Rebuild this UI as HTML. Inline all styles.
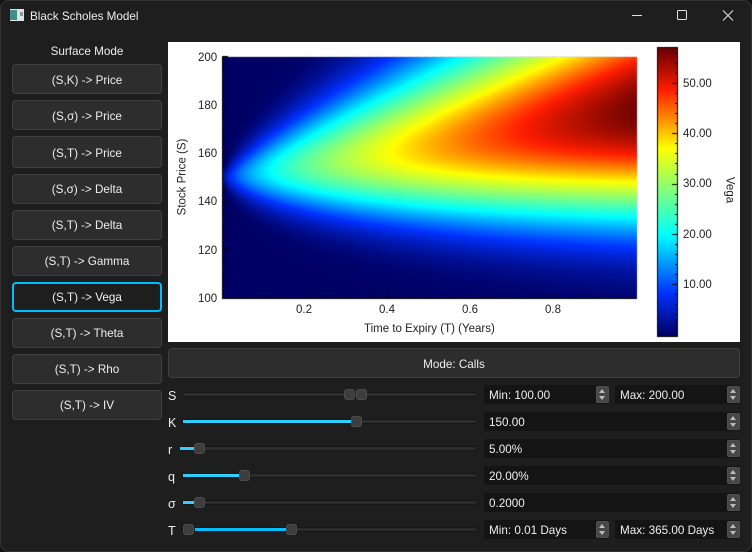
<!DOCTYPE html>
<html><head><meta charset="utf-8"><style>
html,body{margin:0;padding:0;width:752px;height:552px;overflow:hidden;background:#111}
*{box-sizing:border-box}
#w{position:absolute;left:0;top:0;width:752px;height:552px;background:#1e1e1e;border:1px solid #333;border-radius:8px;overflow:hidden;font:11.7px "Liberation Sans","DejaVu Sans",sans-serif;color:#eee}
#w>*,.a{position:absolute}
.tx{white-space:nowrap;line-height:14px}
.b{left:11px;width:150px;height:30px;background:#2d2d2d;border:1px solid #404040;border-radius:4px;text-align:center;line-height:29px;color:#eee}
.b.s{background:#1e1e1e;border:2px solid #00bfff;line-height:28px}
.t{left:181px;width:295px;height:5px;background:#2c2c2c;border:1px solid #161616;border-radius:1px}
.f{height:3px;background:#2fcfff}
.h{width:11px;height:11px;background:#3d3d3d;border:1px solid #4c4c4c;border-radius:3px}
.sb{height:19px;background:#141414;border-radius:2px;padding-left:5px;line-height:21px;color:#eee}
.sp{position:absolute;right:0;top:1px;width:13px;height:17px;background:#474747;border:1px solid #505050;border-radius:2px}
.sp:before,.sp:after{content:"";position:absolute;left:2px;border-left:3.5px solid transparent;border-right:3.5px solid transparent}
.sp:before{top:2px;border-bottom:4px solid #bdbdbd}
.sp:after{bottom:2px;border-top:4px solid #bdbdbd}
.l{left:167px;width:14px;line-height:14px;font-size:12.5px}
.pt{font-size:11.5px;color:#222;line-height:13px;white-space:nowrap}
</style></head><body><div id="w">
<svg style="left:8px;top:7px" width="16" height="14"><rect x="1" y="1" width="14" height="12" fill="#dfe5e5"/><rect x="1" y="2" width="7" height="10" fill="#3f8f86"/><rect x="11" y="4" width="3" height="4" fill="#8a9a9a"/></svg>
<div class="tx" style="left:29px;top:9px">Black Scholes Model</div>
<svg style="left:620px;top:0" width="130" height="30" fill="none" stroke="#e2e2e2" stroke-width="1"><path d="M11 14.5H21"/><rect x="56.5" y="9.5" width="9" height="9" rx="1"/><path d="M102 9.5L112 19.5M112 9.5L102 19.5"/></svg>
<div class="tx" style="left:11px;width:150px;text-align:center;top:44px">Surface Mode</div>
<div class="b" style="top:63px;line-height:31px">(S,K) -&gt; Price</div>
<div class="b" style="top:99px;line-height:31px">(S,σ) -&gt; Price</div>
<div class="b" style="top:135px;height:32px;line-height:33px">(S,T) -&gt; Price</div>
<div class="b" style="top:173px">(S,σ) -&gt; Delta</div>
<div class="b" style="top:209px">(S,T) -&gt; Delta</div>
<div class="b" style="top:245px">(S,T) -&gt; Gamma</div>
<div class="b s" style="top:281px">(S,T) -&gt; Vega</div>
<div class="b" style="top:317px">(S,T) -&gt; Theta</div>
<div class="b" style="top:353px">(S,T) -&gt; Rho</div>
<div class="b" style="top:389px">(S,T) -&gt; IV</div>

<div style="left:167px;top:41px;width:572px;height:300px;background:#fff"></div>
<canvas id="c" width="572" height="300" style="left:167px;top:41px"></canvas>
<div class="pt" style="left:197px;top:51px">200</div>
<div class="pt" style="left:197px;top:99px">180</div>
<div class="pt" style="left:197px;top:147px">160</div>
<div class="pt" style="left:197px;top:195px">140</div>
<div class="pt" style="left:197px;top:244px">120</div>
<div class="pt" style="left:197px;top:292px">100</div>
<div class="pt" style="left:295px;top:303px">0.2</div>
<div class="pt" style="left:378px;top:303px">0.4</div>
<div class="pt" style="left:461px;top:303px">0.6</div>
<div class="pt" style="left:544px;top:303px">0.8</div>
<div class="pt" style="left:363px;top:322px">Time to Expiry (T) (Years)</div>
<div class="pt" style="left:182px;top:176px;transform:translate(-50%,-50%) rotate(-90deg)">Stock Price (S)</div>
<div class="pt" style="left:682px;top:77px">50.00</div>
<div class="pt" style="left:682px;top:127px">40.00</div>
<div class="pt" style="left:682px;top:177px">30.00</div>
<div class="pt" style="left:682px;top:228px">20.00</div>
<div class="pt" style="left:682px;top:278px">10.00</div>
<div class="pt" style="left:728px;top:189px;transform:translate(-50%,-50%) rotate(90deg)">Vega</div>

<div class="b" style="left:167px;width:572px;top:347px;line-height:31px">Mode: Calls</div>

<div class="l" style="top:388px">S</div>
<div class="l" style="top:415px">K</div>
<div class="l" style="top:442px">r</div>
<div class="l" style="top:469px">q</div>
<div class="l" style="top:496px">σ</div>
<div class="l" style="top:523px">T</div>

<div class="t" style="top:391px"></div>
<div class="t" style="top:418px"></div>
<div class="t" style="top:445px"></div>
<div class="t" style="top:472px"></div>
<div class="t" style="top:499px"></div>
<div class="t" style="top:526px"></div>
<div class="f" style="left:182px;width:170px;top:419px"></div>
<div class="f" style="left:179px;width:16px;top:446px"></div>
<div class="f" style="left:182px;width:58px;top:473px"></div>
<div class="f" style="left:182px;width:12px;top:500px"></div>
<div class="f" style="left:194px;width:93px;top:527px;background:#00bfff"></div>
<div class="h" style="left:343px;top:388px"></div>
<div class="h" style="left:355px;top:388px"></div>
<div class="h" style="left:350px;top:415px"></div>
<div class="h" style="left:193px;top:442px"></div>
<div class="h" style="left:238px;top:469px"></div>
<div class="h" style="left:193px;top:496px"></div>
<div class="h" style="left:182px;top:523px"></div>
<div class="h" style="left:285px;top:523px"></div>

<div class="sb" style="left:483px;top:384px;width:125px">Min: 100.00<i class="sp"></i></div>
<div class="sb" style="left:614px;top:384px;width:125px">Max: 200.00<i class="sp"></i></div>
<div class="sb" style="left:483px;top:411px;width:256px">150.00<i class="sp"></i></div>
<div class="sb" style="left:483px;top:438px;width:256px">5.00%<i class="sp"></i></div>
<div class="sb" style="left:483px;top:465px;width:256px">20.00%<i class="sp"></i></div>
<div class="sb" style="left:483px;top:492px;width:256px">0.2000<i class="sp"></i></div>
<div class="sb" style="left:483px;top:519px;width:125px">Min: 0.01 Days<i class="sp"></i></div>
<div class="sb" style="left:614px;top:519px;width:125px">Max: 365.00 Days<i class="sp"></i></div>
</div>
<script>
(function(){
var ctx=document.getElementById('c').getContext('2d'),OX=168,OY=42;
var st=[[0,0,0,100],[.15,0,50,255],[.35,0,255,255],[.65,255,255,0],[.85,255,30,0],[1,100,0,0]];
function jet(v){v=Math.max(0,Math.min(1,v));for(var i=1;i<st.length;i++){if(v<=st[i][0]){var a=st[i-1],b=st[i],t=(v-a[0])/(b[0]-a[0]);return[a[1]+(b[1]-a[1])*t,a[2]+(b[2]-a[2])*t,a[3]+(b[3]-a[3])*t]}}return[100,0,0]}
function vega(S,T){var K=150,r=.05,q=.2,s=.2,sq=Math.sqrt(T),d=(Math.log(S/K)+(r-q+s*s/2)*T)/(s*sq);return S*Math.exp(-q*T)*Math.exp(-d*d/2)/Math.sqrt(2*Math.PI)*sq}
var X0=223,X1=637,Y0=57,Y1=298,VM=57.6;
var w=X1-X0,h=Y1-Y0,im=ctx.createImageData(w,h);
for(var y=0;y<h;y++)for(var x=0;x<w;x++){var T=Math.max(.006,(x+.5)/w),S=200-100*(y+.5)/h,c=jet(vega(S,T)/VM),i=(y*w+x)*4;im.data[i]=c[0];im.data[i+1]=c[1];im.data[i+2]=c[2];im.data[i+3]=255}
ctx.putImageData(im,X0-OX,Y0-OY);
var CX0=658,CX1=677,CY0=47,CY1=336,n=CY1-CY0;
for(var y=0;y<n;y++){var c=jet(1-(y+.5)/n);ctx.fillStyle='rgb('+(c[0]|0)+','+(c[1]|0)+','+(c[2]|0)+')';ctx.fillRect(CX0-OX,CY0-OY+y,CX1-CX0,1)}
ctx.fillStyle='#000';
ctx.fillRect(222-OX,57-OY,1,242);ctx.fillRect(222-OX,298-OY,415,1);
ctx.fillRect(222-OX,56-OY,6,1);
for(var i=0;i<=20;i++){var v=100+i*5,y=Math.round(298-(v-100)*2.41);var L=i%4==0?5:2;ctx.fillRect(223-OX,y-OY,L,1)}
for(var i=1;i<=19;i++){var x=Math.round(222.3+i*20.75);var L=i%4==0?5:2;ctx.fillRect(x-OX,298-L-OY,1,L)}
ctx.fillStyle='#ccc';for(var x=228;x<637;x+=2)ctx.fillRect(x-OX,56-OY,1,1);
ctx.fillStyle='#000';
ctx.fillRect(657-OX,47-OY,21,1);ctx.fillRect(657-OX,336-OY,21,1);ctx.fillRect(657-OX,47-OY,1,290);ctx.fillRect(677-OX,47-OY,1,290);
for(var v=2;v<=56;v+=2){var y=Math.round(334.5-v*5.03);var maj=v%10==0;ctx.fillRect((maj?672:675)-OX,y-OY,maj?5:2,1)}
})();
</script>
</body></html>
